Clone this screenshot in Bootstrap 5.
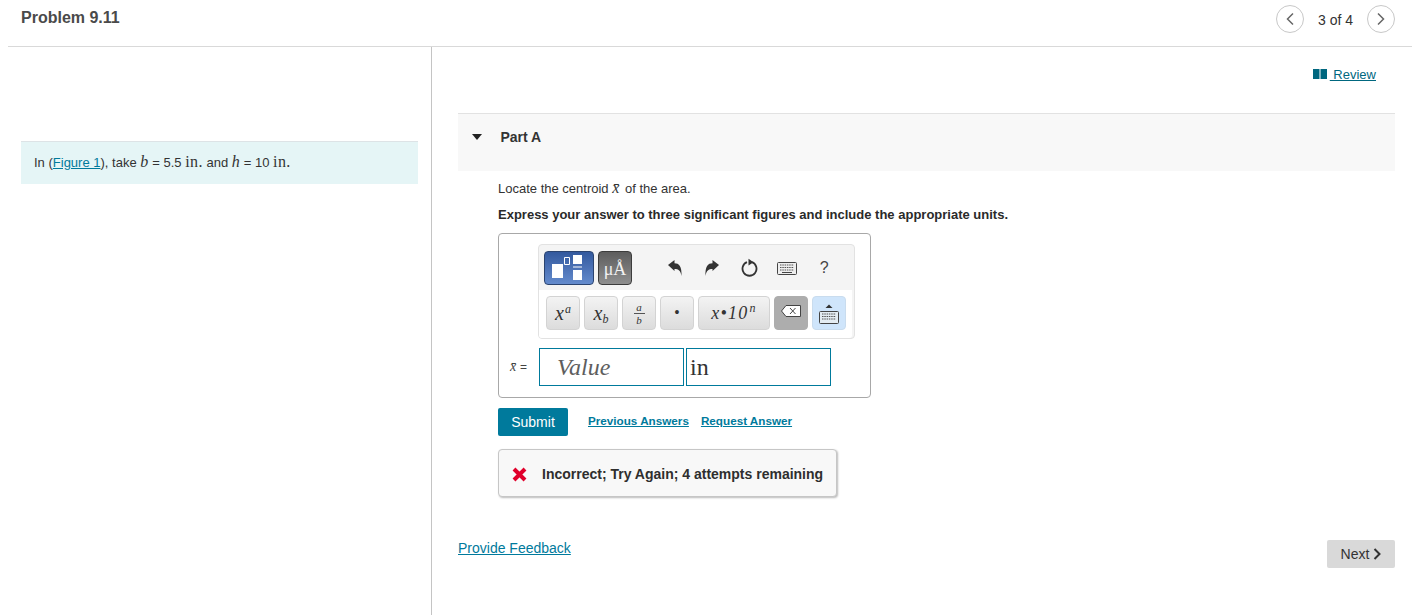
<!DOCTYPE html>
<html lang="en">

<head>
    <meta charset="UTF-8">
    <title>Problem 9.11</title>
    <link href="https://cdn.jsdelivr.net/npm/bootstrap@5.3.0/dist/css/bootstrap.min.css" rel="stylesheet">
    <style>
        html, body { height: 100%; overflow: hidden; }
        body { font-family: "Liberation Sans", Arial, sans-serif; font-size: 13px; color: #333; background: #fff; }
        a { color: #007a9c; }
        .tex { font-family: "Liberation Serif", serif; font-size: 16px; letter-spacing: .4px; line-height: 1; }
        .top-bar { height: 47px; margin-left: 8px; padding: 0 17px 0 13px; border-bottom: 1px solid #d9d9d9; }
        .prob-title { font-size: 16px; font-weight: 700; color: #4a4a4a; line-height: 1; margin-top: -11px; }
        .pager { margin-top: -9px; font-size: 14px; color: #333; gap: 14px; }
        .pager span { margin-top: 4px; }
        .round-btn { width: 28px; height: 28px; border: 1px solid #c8c8c8; border-radius: 50%; background: #fff; }
        .main-wrap { height: 568px; }
        .left-pane { width: 432px; flex: none; border-right: 1px solid #c4c4c4; padding: 94px 13px 0 21px; }
        .intro-box { height: 43px; background: #e5f5f6; border-top: 1px solid #dde3e6; padding-left: 13px; padding-top: 12px; line-height: 18px; }
        .right-pane { flex: 1; padding: 0 17px 0 26px; min-width: 0; }
        .review-row { height: 66px; padding-top: 20px; padding-right: 19px; line-height: 16px; }
        .review-row a { color: #00677f; }
        .review-row svg { margin-right: 3px; }
        .part-head { height: 58px; background: #f8f8f8; border-top: 1px solid #e2e2e2; padding: 14px 0 0 14px; font-weight: 700; font-size: 14px; color: #333; line-height: 18px; gap: 18.5px; }
        .tri-down { width: 0; height: 0; border-left: 5.5px solid transparent; border-right: 5.5px solid transparent; border-top: 6px solid #222; margin-top: 6px; }
        .part-body { padding-left: 40px; }
        .locate { margin-top: 9px; line-height: 18px; }
        .locate .tex { letter-spacing: 2px; }
        .express { margin-top: 9px; font-weight: 700; line-height: 16px; color: #2a2a2a; }
        .answer-box { width: 373px; height: 165px; margin-top: 10px; border: 1px solid #a8a8a8; border-radius: 4px; padding: 10px 0 0 39px; }
        .tool-wrap { width: 317px; height: 95px; background: #f4f4f4; border: 1px solid #e2e2e2; border-radius: 4px; padding: 6px 2px 0 5px; }
        .tool-top { height: 39px; }
        .tool-low { background: #fff; height: 48px; margin: 0 0 0 -5px; padding: 6px 0 0 7px; gap: 4px; width: 313px; border-radius: 0 0 3px 3px; }
        .tpl-btn { width: 50px; height: 34px; flex: none; border: 1px solid #2b4470; border-radius: 4px; background: linear-gradient(#33599e, #648bcd); }
        .tpl-btn svg { display: block; }
        .sym-btn { width: 34px; height: 34px; flex: none; margin-left: 4px; border: 1px solid #3c3c3c; border-radius: 4px; background: linear-gradient(#5d5d5d, #8f8f8f); color: #f2f2f2; font-family: "Liberation Serif", serif; font-size: 18px; line-height: 1; padding-top: 8px; white-space: nowrap; }
        .act-icons { margin-left: 24px; padding-bottom: 5px; }
        .act-cell { width: 37.4px; flex: none; }
        .act-cell svg { display: block; margin: 0 auto; }
        .act-q { font-size: 16px; color: #444; }
        .key-btn { height: 34px; width: 34px; flex: none; border: 1px solid #d3d3d3; border-radius: 4px; background: linear-gradient(#f3f3f3, #dcdcdc); font-family: "Liberation Serif", serif; font-style: italic; font-size: 20px; color: #333; padding: 0; line-height: 1; }
        .key-btn sup { font-size: 12px; top: -.55em; margin-left: 1px; }
        .key-btn sub { font-size: 12px; }
        .key-wide { width: 72px; font-size: 18px; letter-spacing: 1.2px; }
        .key-wide sup { font-size: 12px; }
        .key-dot { font-size: 14px; font-style: normal; font-weight: 700; }
        .key-del { background: #adadad; border-color: #adadad; padding-bottom: 5px; }
        .key-del svg { display: block; margin: 0 auto; }
        .key-kbd { background: #cfe5fb; border-color: #c9dcee; }
        .frac-a { font-size: 11px; line-height: 12px; border-bottom: 1px solid #555; width: 11px; text-align: center; }
        .frac-b { font-size: 11px; line-height: 12px; }
        .input-row { margin-top: 9px; margin-left: -29px; }
        .var-lbl { width: 30px; padding-left: 1px; font-size: 12px; color: #444; flex: none; line-height: 1; }
        .var-lbl .tex { font-size: 14px; }
        .val-field { width: 145px; height: 38px; border: 1px solid #007a9c; font-family: "Liberation Serif", serif; font-size: 24px; line-height: 36px; flex: none; }
        .val-empty { font-style: italic; color: #5e5e5e; padding-left: 17px; }
        .val-unit { margin-left: 2px; padding-left: 3px; color: #333; }
        .sub-row { margin-top: 10px; height: 28px; }
        .submit-btn { width: 70px; height: 28px; padding: 0; flex: none; margin-right: 20px; background: #007a9c; border: 0; border-radius: 2px; color: #fff; font-size: 14px; }
        .sub-link { font-size: 11.7px; font-weight: 700; color: #007a9c; margin-top: -3px; }
        .sub-link + .sub-link { margin-left: 12px; }
        .wrong-box { width: 339px; height: 48px; margin-top: 13px; background: #f8f8f8; border: 1px solid #c6c6c6; border-radius: 4px; box-shadow: 1px 1px 2px #bbb; padding: 3px 0 0 13px; gap: 15px; font-size: 14px; font-weight: 700; color: #2e2e2e; }
        .foot-row { margin-top: 37px; }
        .feedback { font-size: 14px; margin-top: 4px; }
        .next-btn { width: 68px; height: 28px; padding: 0; background: #d9d9d9; border: 0; border-radius: 2px; color: #333; font-size: 14px; margin-top: 6px; }
    </style>
</head>

<body>
    <!-- Header -->
    <div class="top-bar d-flex justify-content-between align-items-center">
        <div class="prob-title">Problem 9.11</div>
        <div class="pager d-flex align-items-center">
            <div class="round-btn d-flex align-items-center justify-content-center">
                <svg width="10" height="14" viewBox="0 0 10 14"><path d="M8 1.500 2.500 7 8 12.500" fill="none" stroke="#666" stroke-width="1.500"/></svg>
            </div>
            <span>3 of 4</span>
            <div class="round-btn d-flex align-items-center justify-content-center">
                <svg width="10" height="14" viewBox="0 0 10 14"><path d="M2 1.500 7.500 7 2 12.500" fill="none" stroke="#666" stroke-width="1.500"/></svg>
            </div>
        </div>
    </div>

    <div class="main-wrap d-flex">
        <!-- Left pane -->
        <div class="left-pane">
            <div class="intro-box">In (<a href="#">Figure 1</a>), take <i class="tex">b</i> = 5.5 <span class="tex">in.</span> and <i class="tex">h</i> = 10 <span class="tex">in.</span></div>
        </div>

        <!-- Right pane -->
        <div class="right-pane">
            <div class="review-row text-end">
                <a href="#"><svg width="14" height="10" viewBox="0 0 14 10" class="align-baseline"><path d="M0 0h6.500v10H0zM7.500 0H14v10H7.500z" fill="#00677f"/></svg> Review</a>
            </div>

            <div class="part-head d-flex">
                <div class="tri-down"></div>
                <div>Part A</div>
            </div>

            <div class="part-body">
                <div class="locate">Locate the centroid <i class="tex">x̄</i> of the area.</div>
                <div class="express">Express your answer to three significant figures and include the appropriate units.</div>

                <div class="answer-box">
                    <div class="tool-wrap">
                        <div class="tool-top d-flex">
                            <div class="tpl-btn">
                                <svg width="48" height="32" viewBox="0 0 48 32">
                                    <path d="M7 12h11v14H7zM28 3h9v9h-9zM28 18h9v10h-9z" fill="#fff"/>
                                    <path d="M28 15h9" stroke="#fff"/>
                                    <path d="M19.500 5.500h5v7h-5z" fill="none" stroke="#fff"/>
                                </svg>
                            </div>
                            <div class="sym-btn text-center">μÅ</div>
                            <div class="act-icons d-flex align-items-center">
                                <div class="act-cell"><svg width="16" height="18" viewBox="0 0 16 18"><path d="M1 6 7.500 1v3.200c4.500 0 7.500 3 7 12.800-1-5.500-3-7-7-7V12z" fill="#333"/></svg></div>
                                <div class="act-cell"><svg width="16" height="18" viewBox="0 0 16 18"><path d="M15 6 8.500 1v3.200c-4.500 0-7.500 3-7 12.800 1-5.500 3-7 7-7V12z" fill="#333"/></svg></div>
                                <div class="act-cell"><svg width="18" height="20" viewBox="0 0 18 20"><path d="M12 4.200a7 7 0 1 1-5 0" fill="none" stroke="#333" stroke-width="1.800"/><path d="M8.500 .8l5 3.400-5 3.200z" fill="#333"/></svg></div>
                                <div class="act-cell"><svg width="20" height="13" viewBox="0 0 20 13"><rect x=".5" y=".5" width="19" height="12" rx="1" fill="#eee" stroke="#444"/><path d="M3 3h14M3 5.500h14M3 8h14" stroke="#555" stroke-dasharray="1.500 .8"/><path d="M5 10.500h10" stroke="#444"/></svg></div>
                                <div class="act-cell text-center act-q">?</div>
                            </div>
                        </div>
                        <div class="tool-low d-flex">
                            <button class="key-btn" type="button">x<sup>a</sup></button>
                            <button class="key-btn" type="button">x<sub>b</sub></button>
                            <button class="key-btn d-flex flex-column align-items-center justify-content-center" type="button"><span class="frac-a">a</span><span class="frac-b">b</span></button>
                            <button class="key-btn key-dot" type="button">•</button>
                            <button class="key-btn key-wide" type="button">x•10<sup>n</sup></button>
                            <button class="key-btn key-del" type="button"><svg width="20" height="12" viewBox="0 0 20 12"><path d="M5 .5h14.500v11H5L.5 6z" fill="#fff" stroke="#444"/><path d="M9 3l5.500 6M14.500 3 9 9" stroke="#444"/></svg></button>
                            <button class="key-btn key-kbd d-flex flex-column align-items-center justify-content-center" type="button"><svg width="20" height="21" viewBox="0 0 20 21"><path d="M6.500 5 10 1.500 13.500 5z" fill="#333"/><rect x=".5" y="8.500" width="19" height="12" rx="1" fill="#e4ecf2" stroke="#444"/><path d="M3 11h14M3 13.500h14M3 16h14" stroke="#555" stroke-dasharray="1.500 .8"/></svg></button>
                        </div>
                    </div>
                    <div class="input-row d-flex align-items-center">
                        <div class="var-lbl"><i class="tex">x̄</i> =</div>
                        <div class="val-field val-empty">Value</div>
                        <div class="val-field val-unit">in</div>
                    </div>
                </div>

                <div class="sub-row d-flex align-items-center">
                    <button class="submit-btn" type="button">Submit</button>
                    <a href="#" class="sub-link">Previous Answers</a>
                    <a href="#" class="sub-link">Request Answer</a>
                </div>

                <div class="wrong-box d-flex align-items-center">
                    <svg width="15" height="15" viewBox="0 0 15 15"><path d="M2 2l11 11M13 2 2 13" stroke="#e0002b" stroke-width="4"/></svg>
                    <span>Incorrect; Try Again; 4 attempts remaining</span>
                </div>
            </div>

            <div class="foot-row d-flex justify-content-between align-items-start">
                <a href="#" class="feedback">Provide Feedback</a>
                <button class="next-btn d-flex align-items-center justify-content-center gap-1" type="button">Next <svg width="8" height="12" viewBox="0 0 8 12"><path d="M1.500 1 6.500 6l-5 5" fill="none" stroke="#333" stroke-width="2"/></svg></button>
            </div>
        </div>
    </div>
</body>

</html>
